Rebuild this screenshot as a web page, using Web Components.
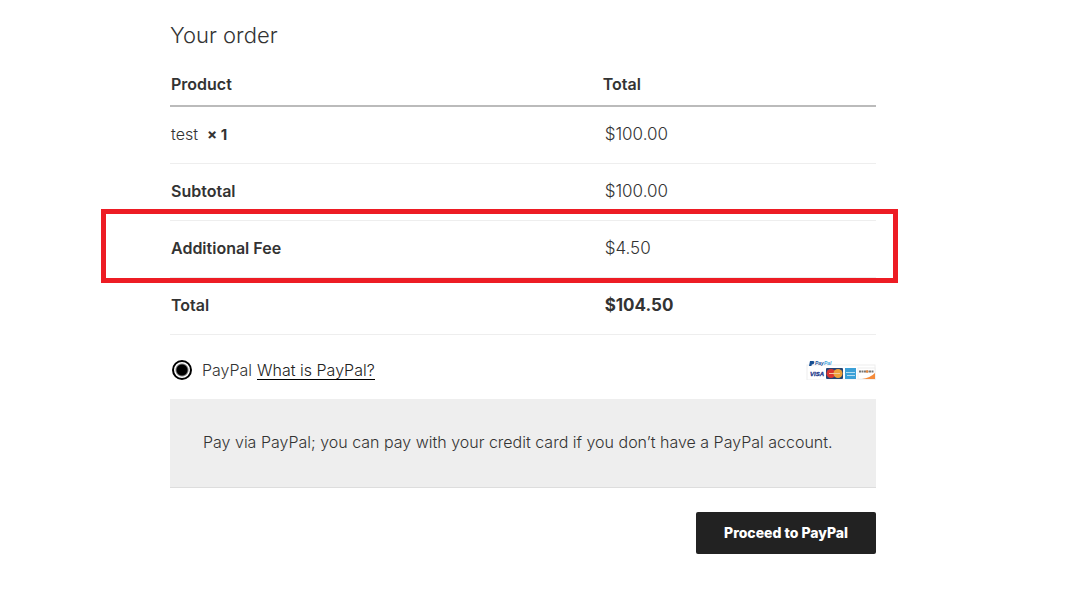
<!DOCTYPE html>
<html lang="en">
<head>
<meta charset="utf-8">
<meta name="viewport" content="width=device-width, initial-scale=1">
<title>Checkout</title>
<style>
  body { margin: 0; background: #fff; color: #333; font: 300 16px/24px Inter, "Liberation Sans", sans-serif; }
</style>
</head>
<body>
<checkout-page>
  <order-table></order-table>
  <payment-method>
    <span slot="description">Pay via PayPal; you can pay with your credit card if you don’t have a PayPal account.</span>
  </payment-method>
  <order-button>Proceed to PayPal</order-button>
</checkout-page>

<template id="checkout-page">
  <style>
    :host { display: grid; grid-template-columns: minmax(16px, 170fr) minmax(0, 706px) minmax(16px, 196fr); }
    main { grid-column: 2; padding: 20px 0 32px; }
    h3 { margin: 0; font-size: 22px; line-height: 30px; font-weight: 300; }
  </style>
  <main>
    <h3>Your order</h3>
    <slot></slot>
  </main>
</template>

<template id="order-table">
  <style>
    :host { display: block; padding-top: 13px; }
    table { width: 100%; border-collapse: separate; border-spacing: 0; table-layout: fixed; }
    th, td { box-sizing: border-box; height: 57px; padding: 0 1px 2px; text-align: left; vertical-align: middle; border-bottom: 1px solid #eee; }
    th { font-weight: 600; }
    th:first-child, td:first-child { width: 61%; }
    td + td, th + td { padding-left: 4px; font-size: 17px; }
    thead th { height: 44px; padding-bottom: 0; border-bottom: 2px solid #bbb; }
    thead th + th { padding-left: 2px; }
    .total td, strong { font-weight: 700; }
    strong { font-size: 15px; }
    .fee { position: relative; }
    .mark { position: absolute; inset: -12px -22px -5px -69px; border: 5px solid #ed1c24; pointer-events: none; }
  </style>
  <table>
    <thead><tr><th scope="col">Product</th><th scope="col">Total</th></tr></thead>
    <tbody><tr><td>test&nbsp; <strong>× 1</strong></td><td>$100.00</td></tr></tbody>
    <tfoot>
      <tr><th scope="row">Subtotal</th><td>$100.00</td></tr>
      <tr class="fee"><th scope="row">Additional Fee<div class="mark"></div></th><td>$4.50</td></tr>
      <tr class="total"><th scope="row">Total</th><td>$104.50</td></tr>
    </tfoot>
  </table>
</template>

<template id="payment-method">
  <style>
    :host { display: block; padding-top: 23px; }
    .choice { display: flex; align-items: center; min-height: 24px; padding: 0 0 17px 2px; }
    input { appearance: none; box-sizing: border-box; width: 20px; height: 20px; margin: 0 10px 0 0; border: 2px solid #000; border-radius: 50%; background: #fff; }
    input:checked { background: radial-gradient(circle, #000 5px, #fff 7px); }
    a { color: #222; text-decoration: none; box-shadow: 0 1px 0 #000; line-height: 18px; display: inline-block; margin-left: 5px; }
    card-logos { margin-left: auto; }
    .box { padding: 31px 33px 33px; background: #eee; border-bottom: 1px solid #ddd; }
  </style>
  <div class="choice">
    <input type="radio" id="paypal" name="payment" checked>
    <label for="paypal">PayPal</label><a href="#about">What is PayPal?</a>
    <card-logos></card-logos>
  </div>
  <div class="box"><slot name="description"></slot></div>
</template>

<template id="card-logos">
  <style>
    :host { display: block; }
    svg { display: block; }
    text { font-family: "Liberation Sans", sans-serif; font-weight: 700; font-style: italic; }
  </style>
  <svg width="70" height="20" viewBox="0 0 70 20" role="img" aria-label="PayPal accepted cards">
    <rect x="1" y="5" width="68" height="15" fill="#fff" stroke="#eee"/>
    <path d="M4 1h3q2 0 1 2.400Q7.500 4.500 5.800 4.500L5.400 6H3z" fill="#164f93"/>
    <text x="9" y="5" font-size="5" fill="#17529a">Pay<tspan fill="#40a4dc">Pal</tspan></text>
    <text x="4" y="16" font-size="6" fill="#22388b" stroke="#22388b" stroke-width=".3">VISA</text>
    <rect x="20" y="8" width="17" height="11" rx="1" fill="#254474"/>
    <circle cx="25" cy="13.500" r="4.500" fill="#dc3531"/>
    <circle cx="32" cy="13.500" r="4.500" fill="#efa13b"/>
    <path d="M23 13.500h11" stroke="#f4c59c"/>
    <rect x="39" y="8" width="11" height="11" fill="#3ba0d7"/>
    <path d="M40 12.500h9M41 15.500h8" stroke="#b4def2"/>
    <rect x="52" y="8" width="17" height="11" fill="#fff" stroke="#eee"/>
    <path d="M69 13v6H56q8-1 13-6z" fill="#f58b3a"/>
    <path d="M53 11.500h15" stroke="#777" stroke-width="2" stroke-dasharray="2 .5"/>
    <circle cx="61" cy="11.500" r="1.300" fill="#e8893f"/>
  </svg>
</template>

<template id="order-button">
  <style>
    :host { display: flex; justify-content: flex-end; padding-top: 24px; }
    button { height: 42px; padding: 0 28px; border: 0; border-radius: 2px; background: #222; color: #fff; font: 800 14px/20px Inter, "Liberation Sans", sans-serif; cursor: pointer; }
  </style>
  <button type="submit"><slot></slot></button>
</template>

<script>
  for (const name of ["checkout-page", "order-table", "card-logos", "payment-method", "order-button"]) {
    customElements.define(name, class extends HTMLElement {
      constructor() {
        super();
        this.attachShadow({ mode: "open" }).append(document.getElementById(name).content.cloneNode(true));
      }
    });
  }
</script>
</body>
</html>
